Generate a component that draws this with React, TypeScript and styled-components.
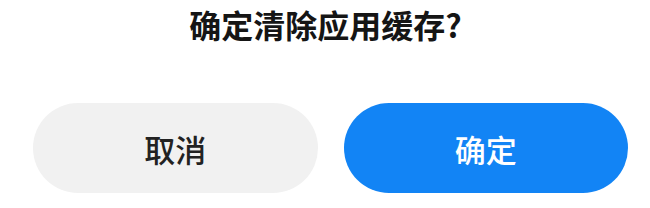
import React from "react";
import styled, { createGlobalStyle } from "styled-components";

const GlobalStyle = createGlobalStyle`
	html, body {
		margin: 0;
		padding: 0;
		background: #ffffff;
	}
	body {
		font-family: "Noto Sans CJK SC", "Noto Sans", sans-serif;
	}
`;

const StyledDialog = styled.div`
	width: 650px;
	height: 208px;
	display: flex;
	flex-direction: column;
	box-sizing: border-box;
	padding: 6px 22px 0 33px;
	background: #ffffff;
`;

const Title = styled.h2`
	margin: 0;
	height: 97px;
	font-size: 32px;
	line-height: 36px;
	font-weight: 600;
	color: #151515;
	text-align: center;
	padding-right: 10px;
`;

const ButtonRow = styled.div`
	display: flex;
	gap: 26px;
`;

interface ButtonProps {
	readonly $primary?: boolean;
}

const Button = styled.button<ButtonProps>`
	flex: 1;
	height: 90px;
	border: none;
	border-radius: 45px;
	font-family: "Noto Sans CJK SC", "Noto Sans", sans-serif;
	font-size: 31px;
	font-weight: 500;
	background: ${({ $primary }) => ($primary ? "#1284f5" : "#f1f1f1")};
	color: ${({ $primary }) => ($primary ? "#ffffff" : "#222222")};
	cursor: pointer;
`;

const App = () => (
	<>
		<GlobalStyle />
		<StyledDialog>
			<Title>确定清除应用缓存?</Title>
			<ButtonRow>
				<Button>取消</Button>
				<Button $primary>确定</Button>
			</ButtonRow>
		</StyledDialog>
	</>
);

export default App;
